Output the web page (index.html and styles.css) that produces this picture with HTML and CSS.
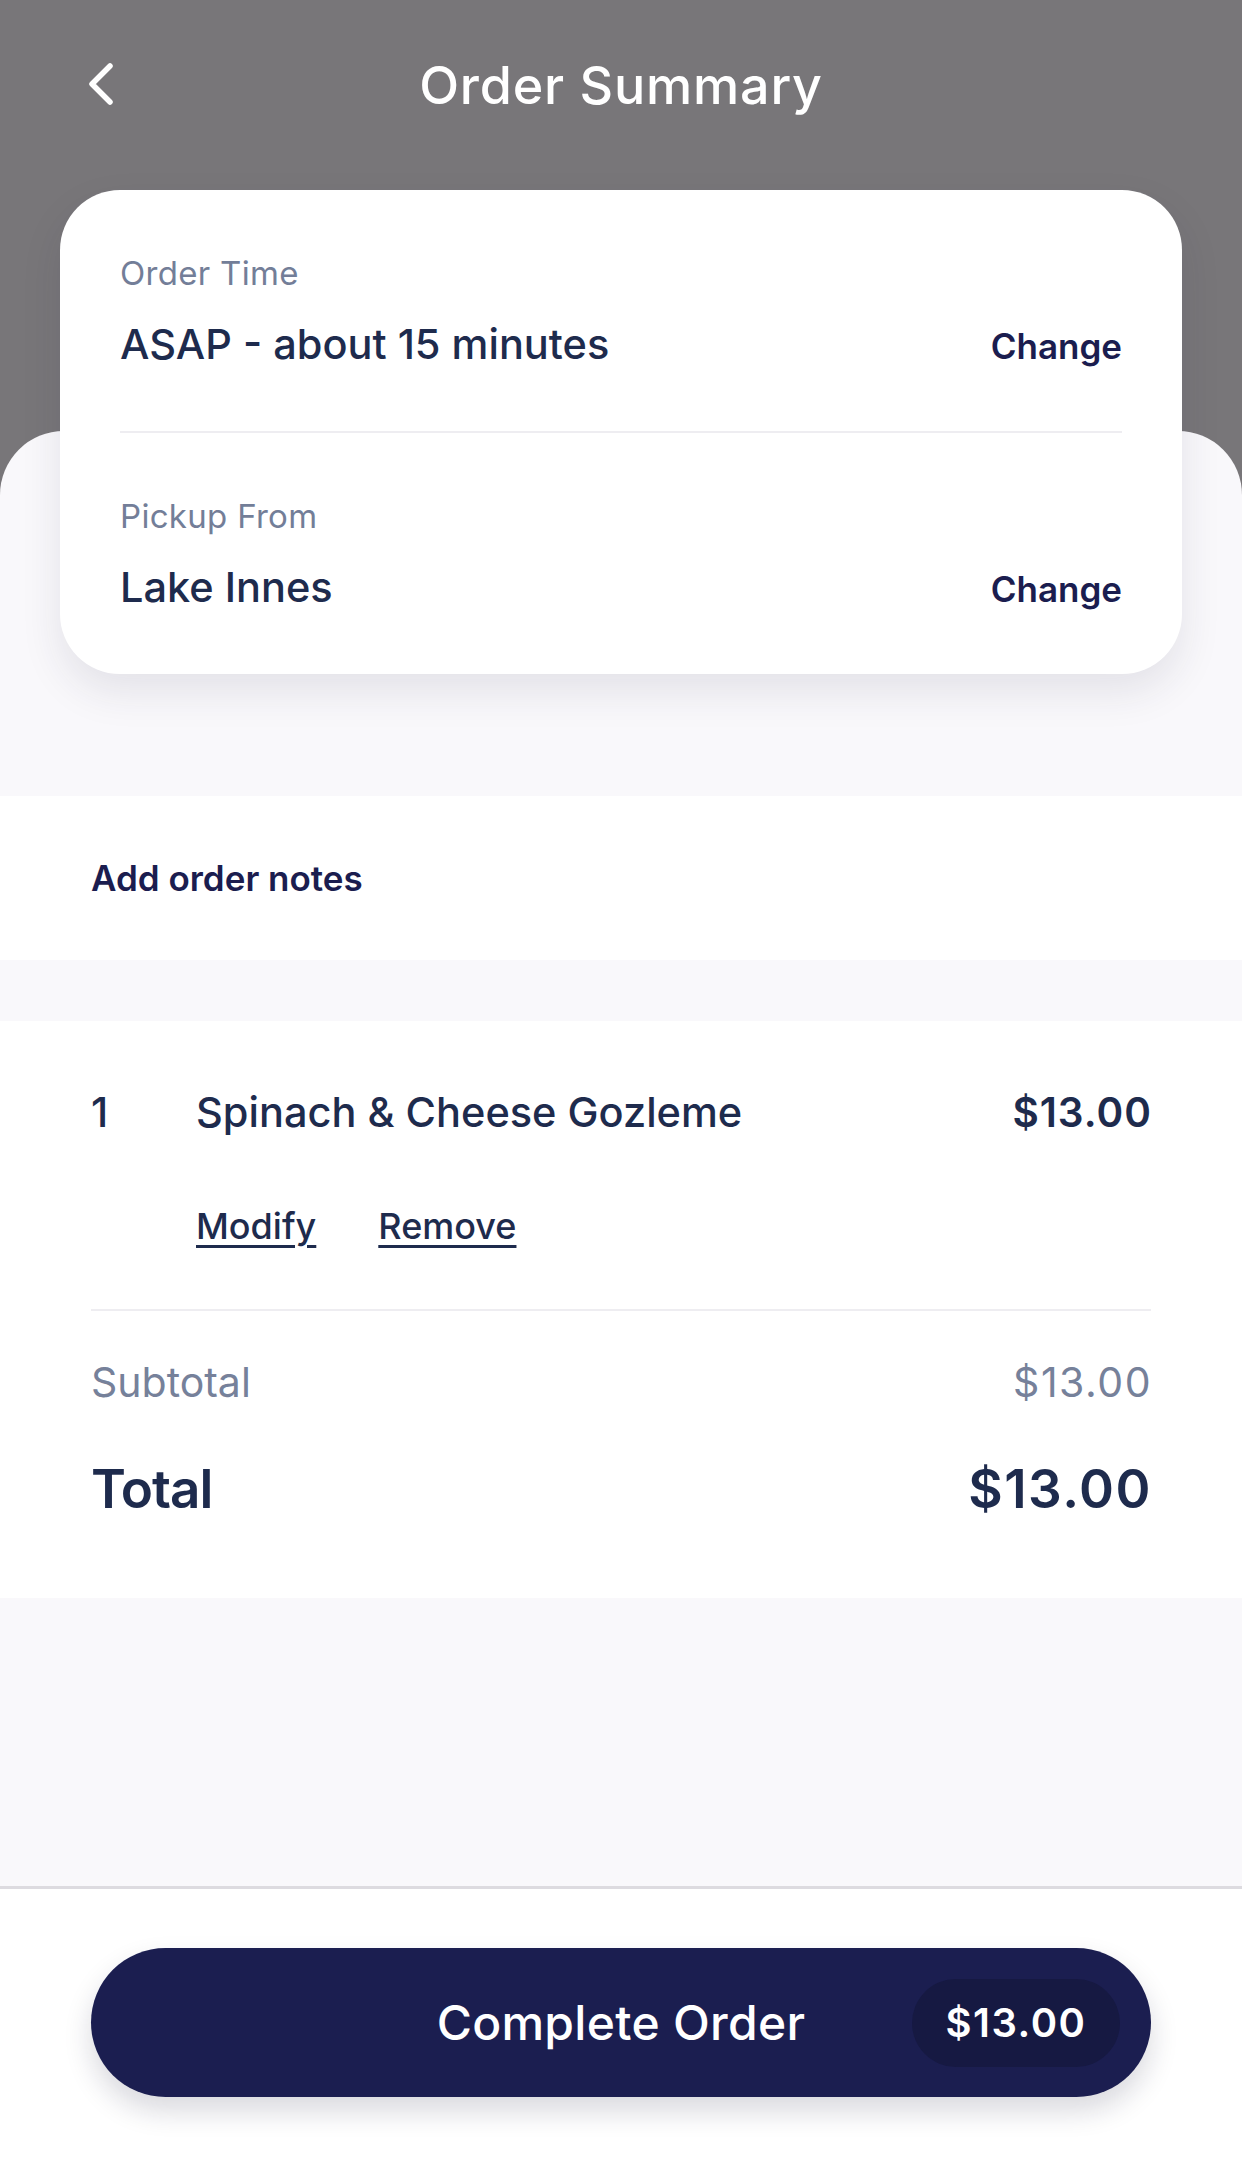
FILE: index.html
```html
<!DOCTYPE html>
<html lang="en">
<head>
  <meta charset="UTF-8" />
  <meta name="viewport" content="width=device-width, initial-scale=1.0" />
  <title>Order Summary</title>
  <link rel="stylesheet" href="styles.css">
</head>
<body>
  <div class="app">
    <header class="header">
      <div class="topbar">
        <div class="back">
          <svg width="34" height="48" viewBox="0 0 34 48">
            <polyline points="24,5 6,23 24,41" fill="none" stroke="#fff" stroke-width="5.5" stroke-linecap="round" stroke-linejoin="round" />
          </svg>
        </div>
        <h1 class="title">Order Summary</h1>
        <div></div>
      </div>
    </header>

    <main class="sheet">
      <section class="card">
        <div class="card-row">
          <div class="label">Order Time</div>
          <div class="value-row">
            <span class="value">ASAP - about 15 minutes</span>
            <span class="change">Change</span>
          </div>
        </div>
        <div class="card-row">
          <div class="label">Pickup From</div>
          <div class="value-row">
            <span class="value">Lake Innes</span>
            <span class="change">Change</span>
          </div>
        </div>
      </section>

      <section class="notes">
        <span>Add order notes</span>
      </section>

      <section class="items">
        <div class="item">
          <div class="item-line">
            <span class="qty">1</span>
            <span class="item-name">Spinach &amp; Cheese Gozleme</span>
            <span class="price">$13.00</span>
          </div>
          <div class="item-actions">
            <span class="link">Modify</span>
            <span class="link">Remove</span>
          </div>
        </div>
        <div class="subtotal">
          <span>Subtotal</span>
          <span class="price">$13.00</span>
        </div>
        <div class="total">
          <span>Total</span>
          <span class="price">$13.00</span>
        </div>
      </section>
    </main>

    <footer class="footer">
      <div class="complete">
        <div></div>
        <span class="complete-label">Complete Order</span>
        <span class="complete-price">$13.00</span>
      </div>
    </footer>
  </div>
</body>
</html>
```

FILE: styles.css
```css
body {
  margin: 0;
  font-family: Inter, "Noto Sans", sans-serif;
  color: #1e2b4d;
}
.app {
  display: flex;
  flex-direction: column;
  height: 100vh;
  background: #787679;
}
.header {
  height: 431px;
  flex-shrink: 0;
}
.topbar {
  display: grid;
  grid-template-columns: 1fr auto 1fr;
  align-items: center;
  height: 70px;
  padding: 50px 86px 0;
}
.back {
  display: flex;
  align-items: center;
}
.title {
  margin: 0;
  font-size: 52px;
  font-weight: 500;
  color: #ffffff;
  letter-spacing: 0.8px;
}
.sheet {
  flex: 1;
  display: flex;
  flex-direction: column;
  background: #f9f8fb;
  border-radius: 64px 64px 0 0;
}
.card {
  margin: -241px 60px 0;
  padding: 0 60px;
  background: #ffffff;
  border-radius: 60px;
  box-shadow: 0 18px 40px rgba(40, 40, 70, 0.1);
}
.card-row {
  padding: 65px 0 62px;
}
.card-row + .card-row {
  border-top: 2px solid #eeedf1;
}
.label {
  font-size: 33px;
  line-height: 36px;
  color: #737e98;
  letter-spacing: 0.3px;
}
.value-row {
  display: flex;
  justify-content: space-between;
  align-items: baseline;
  margin-top: 28px;
}
.value {
  font-size: 41.5px;
  line-height: 50px;
  font-weight: 500;
}
.change {
  font-size: 35px;
  font-weight: 600;
  color: #1b1d4f;
}
.notes {
  display: flex;
  align-items: center;
  height: 164px;
  margin-top: 122px;
  padding: 0 91px;
  background: #ffffff;
  font-size: 35px;
  font-weight: 600;
  color: #1b1d4f;
}
.items {
  margin-top: 61px;
  padding: 66px 91px 78px;
  background: #ffffff;
}
.item {
  padding-bottom: 61px;
  border-bottom: 2px solid #eeedf1;
}
.item-line {
  display: flex;
  align-items: baseline;
  font-size: 41.5px;
  line-height: 50px;
  font-weight: 500;
}
.qty {
  width: 105px;
}
.item-name {
  flex: 1;
}
.price {
  letter-spacing: 1.5px;
  margin-right: -1px;
}
.item-line .price {
  font-weight: 600;
  font-size: 40.5px;
  letter-spacing: 1px;
}
.item-actions {
  display: flex;
  gap: 62px;
  margin-top: 66px;
  padding-left: 105px;
}
.link {
  font-size: 36px;
  line-height: 44px;
  font-weight: 500;
  text-decoration: underline;
  text-underline-offset: 6px;
  text-decoration-thickness: 3px;
}
.subtotal {
  display: flex;
  justify-content: space-between;
  margin-top: 46px;
  font-size: 41px;
  line-height: 50px;
  color: #76819a;
}
.total {
  display: flex;
  justify-content: space-between;
  margin-top: 51px;
  font-size: 53px;
  line-height: 62px;
  font-weight: 600;
}
.total span:first-child {
  letter-spacing: -1px;
}
.footer {
  height: 272px;
  flex-shrink: 0;
  padding: 59px 91px 0;
  box-sizing: border-box;
  background: #ffffff;
  border-top: 3px solid #dddbe0;
}
.complete {
  display: grid;
  grid-template-columns: 1fr auto 1fr;
  align-items: center;
  height: 149px;
  padding: 0 31px;
  border-radius: 75px;
  background: #1b1e50;
  box-shadow: 0 14px 28px rgba(20, 20, 50, 0.16);
  color: #ffffff;
}
.complete-label {
  font-size: 48px;
  font-weight: 500;
  letter-spacing: 0.3px;
}
.complete-price {
  justify-self: end;
  width: 208px;
  height: 88px;
  border-radius: 44px;
  background: #161942;
  display: flex;
  align-items: center;
  justify-content: center;
  font-size: 40px;
  font-weight: 600;
  letter-spacing: 1.5px;
}
```
